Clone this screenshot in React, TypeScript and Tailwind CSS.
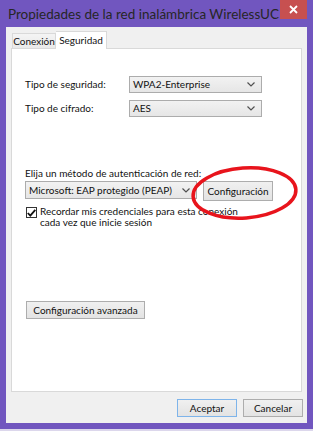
import React from 'react'

function Chevron() {
  return (
    <svg width="8" height="5" viewBox="0 0 8 5" className="shrink-0">
      <polyline points="0.5,0.5 4,4 7.5,0.5" fill="none" stroke="#505050" strokeWidth="1.2" />
    </svg>
  )
}

function Select({ value, className }: { value: string; className: string }) {
  return (
    <div
      className={`flex items-center justify-between border border-[#acacac] bg-gradient-to-b from-[#f2f2f2] to-[#e6e6e6] pl-[3px] pr-[6px] text-[10px] text-[#111] ${className}`}
    >
      <span className="whitespace-nowrap">{value}</span>
      <Chevron />
    </div>
  )
}

function Button({ label, className }: { label: string; className: string }) {
  return (
    <button
      className={`flex items-center justify-center border bg-gradient-to-b from-[#f0f0f0] to-[#e3e3e3] text-[10px] text-[#111] ${className}`}
    >
      {label}
    </button>
  )
}

export default function App() {
  return (
    <div className="relative h-[431px] w-[313px] bg-[#dcd7ec] font-['Lato',sans-serif]">
      <div className="flex h-[429px] flex-col bg-[#7156bf]">
        {/* title bar */}
        <div className="flex h-[27px] items-start">
          <div className="min-w-0 flex-1 overflow-hidden whitespace-nowrap pl-[8px] pt-[6px] text-[13.5px] leading-[17px] text-[#262626]">
            Propiedades de la red inalámbrica WirelessUC
          </div>
          <div className="mr-[6px] flex h-[19px] w-[27px] shrink-0 items-center justify-center bg-[#c75050]">
            <svg width="9" height="9" viewBox="0 0 9 9">
              <path d="M1 1 L8 8 M8 1 L1 8" stroke="#fff" strokeWidth="1.8" />
            </svg>
          </div>
        </div>

        <div className="mx-[6px] mb-[6px] flex flex-1 flex-col bg-[#f0f0f0] px-[5px] pt-[4px]">
          {/* tabs */}
          <div className="flex h-[17px] items-end">
            <div className="ml-[1px] flex h-[15px] w-[44px] items-center justify-center border border-b-0 border-[#d9d9d9] bg-gradient-to-b from-[#f4f4f4] to-[#e9e9e9] text-[10px] text-[#111]">
              Conexión
            </div>
            <div className="relative z-10 -mb-[1px] flex h-[18px] w-[51px] items-center justify-center border border-b-0 border-l-0 border-[#d9d9d9] bg-white text-[10px] text-[#111]">
              Seguridad
            </div>
          </div>

          {/* panel */}
          <div className="flex h-[344px] flex-col border border-[#d9d9d9] bg-white pl-[13px] pt-[27px] text-[10px] text-[#111]">
            <div className="flex h-[17px] items-center">
              <span className="w-[104px]">Tipo de seguridad:</span>
              <Select value="WPA2-Enterprise" className="h-[17px] w-[133px]" />
            </div>
            <div className="mt-[7px] flex h-[17px] items-center">
              <span className="w-[104px]">Tipo de cifrado:</span>
              <Select value="AES" className="h-[17px] w-[133px]" />
            </div>

            <div className="mt-[50px] leading-[12px]">Elija un método de autenticación de red:</div>
            <div className="mt-[2px] flex items-start">
              <Select value="Microsoft: EAP protegido (PEAP)" className="h-[18px] w-[172px]" />
              <Button label="Configuración" className="ml-[6px] h-[20px] w-[70px] border-[#adadad]" />
            </div>

            <div className="mt-[5px] flex items-start">
              <div className="ml-[1px] mt-[1px] flex h-[11px] w-[11px] shrink-0 items-center justify-center border border-[#333] bg-white">
                <svg width="9" height="8" viewBox="0 0 9 8">
                  <polyline points="0.8,4 3.3,6.6 8.3,0.8" fill="none" stroke="#111" strokeWidth="1.8" />
                </svg>
              </div>
              <div className="ml-[3px] leading-[11px]">
                Recordar mis credenciales para esta conexión
                <br />
                cada vez que inicie sesión
              </div>
            </div>

            <Button label="Configuración avanzada" className="ml-[1px] mt-[73px] h-[18px] w-[119px] border-[#adadad]" />
          </div>

          {/* footer buttons */}
          <div className="-mr-[1px] flex flex-1 items-start justify-end gap-[6px] pt-[7px]">
            <Button label="Aceptar" className="h-[18px] w-[60px] border-[#7eb4ea]" />
            <Button label="Cancelar" className="h-[18px] w-[60px] border-[#adadad]" />
          </div>
        </div>
      </div>

      {/* red highlight drawn over the dialog */}
      <svg className="pointer-events-none absolute left-0 top-0" width="313" height="431">
        <ellipse cx="244.5" cy="193" rx="51.5" ry="25" fill="none" stroke="#e8141c" strokeWidth="3.5" transform="rotate(-4 244.5 193)" />
      </svg>
    </div>
  )
}
